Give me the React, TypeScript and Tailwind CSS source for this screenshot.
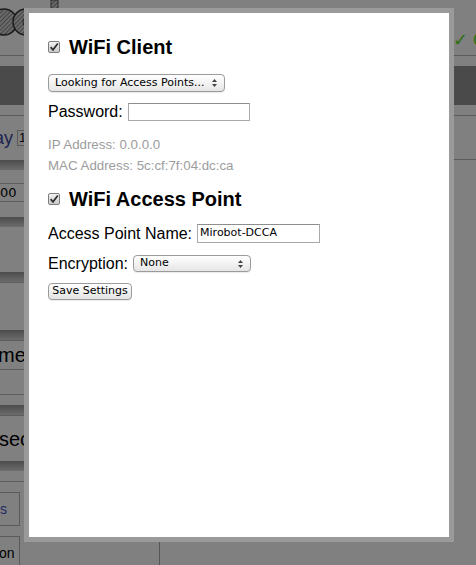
import React from 'react'

const sans = { fontFamily: '"Liberation Sans", Arial, sans-serif' }
const ui = { fontFamily: '"DejaVu Sans", Verdana, sans-serif' }

function Check() {
  return (
    <span className="flex h-[12px] w-[12px] shrink-0 items-center justify-center rounded-[2px] border border-[#7d7d7d] bg-gradient-to-b from-[#f4f4f4] to-[#c9c9c9]">
      <svg width="10" height="10" viewBox="0 0 10 10">
        <path d="M1.6 5.2 L4 7.8 L8.8 1.4" fill="none" stroke="#2e2e2e" strokeWidth="1.7" />
      </svg>
    </span>
  )
}

function Arrows() {
  return (
    <svg width="5" height="8" viewBox="0 0 5 8" className="shrink-0">
      <path d="M0 3 L2.5 0 L5 3 Z M0 5 L2.5 8 L5 5 Z" fill="#444" />
    </svg>
  )
}

function Select({ label, width, height }: { label: string; width: string; height: string }) {
  return (
    <div
      className={`flex ${width} ${height} items-center justify-between rounded-[4px] border border-[#9b9b9b] bg-gradient-to-b from-white to-[#e6e6e6] pl-[6px] pr-[7px] text-[11px] text-black shadow-[0_1px_0_rgba(0,0,0,0.08)]`}
      style={ui}
    >
      <span>{label}</span>
      <Arrows />
    </div>
  )
}

function TextInput({ value, width, height }: { value?: string; width: string; height: string }) {
  return (
    <div
      className={`flex ${width} ${height} items-center border border-[#a9a9a9] border-t-[#8e8e8e] bg-white pl-[2px] text-[11px] text-black`}
      style={ui}
    >
      {value}
    </div>
  )
}

function Band() {
  return <div className="h-[10px] bg-gradient-to-b from-[#4c4c4c] to-[#6c6c6c]" />
}

function Circles() {
  return (
    <svg width="64" height="40" viewBox="0 0 64 40">
      <defs>
        <pattern id="hatch" width="3" height="3" patternUnits="userSpaceOnUse" patternTransform="rotate(45)">
          <rect width="3" height="3" fill="#6a6a6a" />
          <line x1="0" y1="0" x2="0" y2="3" stroke="#2a2a2a" strokeWidth="1.2" />
        </pattern>
      </defs>
      <circle cx="4" cy="22" r="13" fill="url(#hatch)" stroke="#1c1c1c" strokeWidth="1.5" />
      <circle cx="26" cy="22" r="13" fill="url(#hatch)" stroke="#1c1c1c" strokeWidth="1.5" />
      <circle cx="30" cy="22" r="7" fill="#7a7a7a" stroke="#1c1c1c" strokeWidth="1" />
      <rect x="51" y="0" width="7" height="10" fill="url(#hatch)" stroke="#2a2a2a" strokeWidth="1" />
    </svg>
  )
}

export default function App() {
  return (
    <div className="relative h-[565px] w-[476px] overflow-hidden bg-[#808080]" style={sans}>
      {/* dimmed page behind the dialog */}
      <header className="flex h-[56px] items-start justify-between border-b border-[#5c5c5c]">
        <Circles />
        <span className="mr-[-10px] mt-[27px] text-[18px] text-[#2f6e12]">✓ C</span>
      </header>
      <div className="mt-[10px] h-[39px] bg-[#4a4a4a]" />
      <div className="h-[11px] border-b border-[#5c5c5c]" />
      <div className="flex">
        <aside className="flex w-[160px] flex-col border-r border-[#555]">
          <div className="flex h-[44px] items-center gap-[4px] text-[18px] text-[#1d2450]">
            <span className="-ml-[6px]">ay</span>
            <span className="flex h-[16px] w-[12px] items-center border border-[#5a5a5a] pl-[1px] text-[13px] text-black">1</span>
          </div>
          <Band />
          <div className="mt-[13px] flex h-[19px] items-center border-y border-[#5e5e5e] text-[13px] text-black" style={ui}>
            00
          </div>
          <div className="h-[15px]" />
          <Band />
          <div className="h-[45px]" />
          <Band />
          <div className="h-[48px] border-t border-[#5e5e5e]" />
          <Band />
          <div className="flex h-[30px] items-center border-y border-[#5e5e5e] text-[20px] text-black">
            <span className="-ml-[2px]">mes</span>
          </div>
          <div className="h-[25px] border-b border-[#5e5e5e]" />
          <div className="h-[10px]" />
          <Band />
          <div className="flex h-[46px] items-center border-t border-[#5e5e5e] text-[20px] text-black">
            <span className="-ml-[1px]">sec</span>
          </div>
          <Band />
          <div className="h-[11px] border-b border-[#5e5e5e]" />
          <div className="mt-[10px] flex h-[34px] w-[20px] items-center border border-l-0 border-[#5a5a5a] text-[14px] text-[#1d2a60]">
            s
          </div>
          <div className="mt-[10px] flex h-[34px] w-[20px] items-center border border-l-0 border-[#5a5a5a] text-[14px] text-black">
            <span className="-ml-[1px]">on</span>
          </div>
        </aside>
        <main className="flex-1">
          <div className="h-[44px] border-b border-[#5c5c5c]" />
        </main>
      </div>

      {/* settings dialog */}
      <div className="absolute left-[24px] top-[8px] h-[534px] w-[430px] border-[5px] border-[#9a9a9a] bg-white">
        <div className="flex flex-col items-start pl-[19px] pt-[22px]">
          <div className="flex h-[24px] items-center gap-[9px]">
            <Check />
            <h2 className="text-[20px] font-bold text-black">WiFi Client</h2>
          </div>
          <div className="mt-[15px]">
            <Select label="Looking for Access Points..." width="w-[177px]" height="h-[18px]" />
          </div>
          <div className="mt-[11px] flex h-[18px] items-center gap-[5px]">
            <span className="text-[16px] text-black">Password:</span>
            <TextInput width="w-[122px]" height="h-[18px]" />
          </div>
          <div className="mt-[13px] text-[13.3px] leading-[21px] text-[#9c9c9c]">
            <p>IP Address: 0.0.0.0</p>
            <p>MAC Address: 5c:cf:7f:04:dc:ca</p>
          </div>
          <div className="mt-[11px] flex h-[24px] items-center gap-[9px]">
            <Check />
            <h2 className="text-[20px] font-bold text-black">WiFi Access Point</h2>
          </div>
          <div className="mt-[13px] flex h-[19px] items-center gap-[5px]">
            <span className="text-[16px] text-black">Access Point Name:</span>
            <TextInput value="Mirobot-DCCA" width="w-[123px]" height="h-[19px]" />
          </div>
          <div className="mt-[12px] flex h-[17px] items-center gap-[5px]">
            <span className="text-[16px] text-black">Encryption:</span>
            <Select label="None" width="w-[118px]" height="h-[17px]" />
          </div>
          <button
            className="mt-[11px] flex h-[17px] w-[84px] items-center justify-center rounded-[4px] border border-[#9b9b9b] bg-gradient-to-b from-white to-[#e3e3e3] text-[11px] text-black shadow-[0_1px_0_rgba(0,0,0,0.08)]"
            style={ui}
          >
            Save Settings
          </button>
        </div>
      </div>
    </div>
  )
}
